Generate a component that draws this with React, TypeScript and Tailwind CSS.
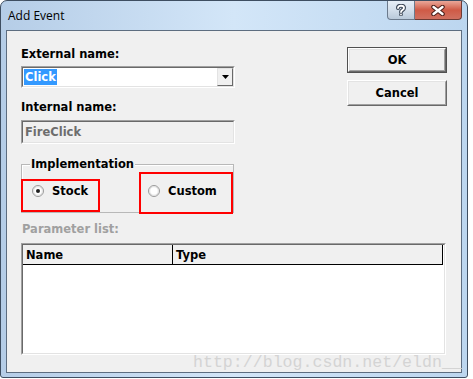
import React from 'react';

const ui = "font-['DejaVu_Sans',sans-serif] font-bold text-[11.5px] leading-[14px]";

function Sunken({ className, children }: { className?: string; children?: React.ReactNode }) {
  return (
    <div className={`border border-t-[#a0a0a0] border-l-[#a0a0a0] border-b-white border-r-white ${className ?? ''}`}>
      <div className="h-full border border-t-[#696969] border-l-[#696969] border-b-[#e3e3e3] border-r-[#e3e3e3] flex">
        {children}
      </div>
    </div>
  );
}

function Btn({ label, isDefault }: { label: string; isDefault?: boolean }) {
  return (
    <div className={`w-[100px] h-[26px] ${isDefault ? 'border border-[#505050]' : ''}`}>
      <div className="h-full border border-t-white border-l-white border-b-[#696969] border-r-[#696969]">
        <div className={`h-full border border-t-[#e3e3e3] border-l-[#e3e3e3] border-b-[#a0a0a0] border-r-[#a0a0a0] flex items-center justify-center ${ui} text-black`}>
          {label}
        </div>
      </div>
    </div>
  );
}

function Radio({ checked }: { checked?: boolean }) {
  return (
    <svg width="12" height="12" viewBox="0 0 12 12">
      <circle cx="6" cy="6" r="5.5" fill="#f4f4f4" stroke="#9a9a9a" />
      <circle cx="6" cy="6" r="4.3" fill="white" stroke="#d8d8d8" strokeWidth="0.8" />
      {checked && <circle cx="6" cy="6" r="2" fill="#202020" />}
    </svg>
  );
}

export default function App() {
  return (
    <div className="w-[473px] h-[379px] bg-white relative overflow-hidden">
      <div className="w-[468px] h-[378px] border border-[#3e4e61] rounded-t-[7px] rounded-b-[3px] bg-gradient-to-r from-[#b5cde7] via-[#d3e6f8] to-[#bcd6ef] flex flex-col">
        {/* title bar */}
        <div className="h-[29px] flex items-start">
          <span className="pl-[7px] pt-[8px] font-['Open_Sans',sans-serif] text-[12px] leading-[14px] text-black">Add Event</span>
          <div className="ml-auto mr-[5px] flex">
            <div className="w-[28px] h-[19px] border border-t-0 border-[#6b7a8c] rounded-bl-[4px] bg-gradient-to-b from-[#e6eef6] via-[#d3dfeb] to-[#b9c9da] flex items-center justify-center">
              <svg width="10" height="12" viewBox="0 0 10 12">
                <path d="M2 4 C2 1, 8 1, 8 4 C8 6, 5 6, 5 8" fill="none" stroke="#3a4656" strokeWidth="4" strokeLinecap="round" />
                <circle cx="5" cy="10.5" r="1.8" fill="#3a4656" />
                <path d="M2 4 C2 1, 8 1, 8 4 C8 6, 5 6, 5 8" fill="none" stroke="white" strokeWidth="1.8" strokeLinecap="round" />
                <circle cx="5" cy="10.5" r="0.9" fill="white" />
              </svg>
            </div>
            <div className="w-[47px] h-[19px] border border-t-0 border-l-0 border-[#6e3a33] rounded-br-[4px] bg-gradient-to-b from-[#e9a799] via-[#cf5a46] to-[#d07060] flex items-center justify-center">
              <svg width="14" height="11" viewBox="0 0 14 11">
                <path d="M2.5 2 L11.5 9 M11.5 2 L2.5 9" stroke="#4a1f1a" strokeWidth="4.5" strokeLinecap="round" />
                <path d="M2.5 2 L11.5 9 M11.5 2 L2.5 9" stroke="white" strokeWidth="2.4" strokeLinecap="round" />
              </svg>
            </div>
          </div>
        </div>

        {/* client area */}
        <div className="mx-[5px] h-[343px] border border-[#5d6d80] bg-[#f0f0f0] relative">
          <div className="flex pt-[16px] pl-[14px]">
            <div className="w-[214px] flex flex-col">
              <span className={`${ui} text-black`}>External name:</span>
              <Sunken className="mt-[5px] h-[22px] bg-white">
                <div className="flex-1 flex items-center pl-[1px]">
                  <span className={`${ui} bg-[#3399ff] text-white px-[1px] h-[16px] flex items-center`}>Click</span>
                </div>
                <div className="w-[16px] h-full border border-t-[#e3e3e3] border-l-[#e3e3e3] border-b-[#696969] border-r-[#696969] bg-[#f0f0f0] flex items-center justify-center">
                  <svg width="7" height="4" viewBox="0 0 7 4"><path d="M0 0 H7 L3.5 4 Z" fill="black" /></svg>
                </div>
              </Sunken>
              <span className={`${ui} text-black mt-[12px]`}>Internal name:</span>
              <Sunken className="mt-[6px] h-[24px]">
                <div className="flex-1 flex items-center pl-[2px]">
                  <span className={`${ui} text-[#6d6d6d]`}>FireClick</span>
                </div>
              </Sunken>
            </div>
            <div className="ml-[112px] flex flex-col gap-[7px]">
              <Btn label="OK" isDefault />
              <Btn label="Cancel" />
            </div>
          </div>

          {/* Implementation group */}
          <div className="ml-[14px] mt-[20px] w-[213px] h-[49px] border border-[#b8b8b8] shadow-[inset_1px_1px_0_white] relative">
            <span className={`absolute left-[8px] -top-[8px] px-[1px] bg-[#f0f0f0] ${ui} text-black`}>Implementation</span>
            <div className="flex items-center pt-[19px]">
              <div className="flex items-center pl-[10px] w-[126px]">
                <Radio checked />
                <span className={`${ui} text-black ml-[8px]`}>Stock</span>
              </div>
              <div className="flex items-center">
                <Radio />
                <span className={`${ui} text-black ml-[8px]`}>Custom</span>
              </div>
            </div>
          </div>

          <div className={`ml-[15px] mt-[9px] ${ui} text-[#a0a0a0]`}>Parameter list:</div>

          {/* list view */}
          <div className="ml-[14px] mt-[7px] w-[425px] h-[112px] border border-t-[#a0a0a0] border-l-[#a0a0a0] border-b-white border-r-white">
            <div className="h-full border border-t-[#696969] border-l-[#696969] border-b-[#e3e3e3] border-r-[#e3e3e3] bg-white flex flex-col">
              <div className="h-[20px] flex bg-[#f0f0f0] border-b border-black border-r border-r-black mr-[1px]">
                <div className={`w-[150px] border-r border-black pl-[3px] flex items-center ${ui} text-black`}>Name</div>
                <div className={`flex-1 pl-[3px] flex items-center ${ui} text-black`}>Type</div>
              </div>
            </div>
          </div>

          {/* annotation boxes */}
          <div className="absolute left-[14px] top-[148px] w-[79px] h-[33px] border-2 border-[#ff0000]" />
          <div className="absolute left-[132px] top-[141px] w-[94px] h-[42px] border-2 border-[#ff0000]" />
        </div>
      </div>

      {/* watermark */}
      <span className="absolute left-[193px] top-[353px] font-['Liberation_Mono',monospace] text-[16.6px] leading-[20px] text-[#d2d2d2] opacity-90 whitespace-nowrap">http://blog.csdn.net/eldn__</span>
    </div>
  );
}
